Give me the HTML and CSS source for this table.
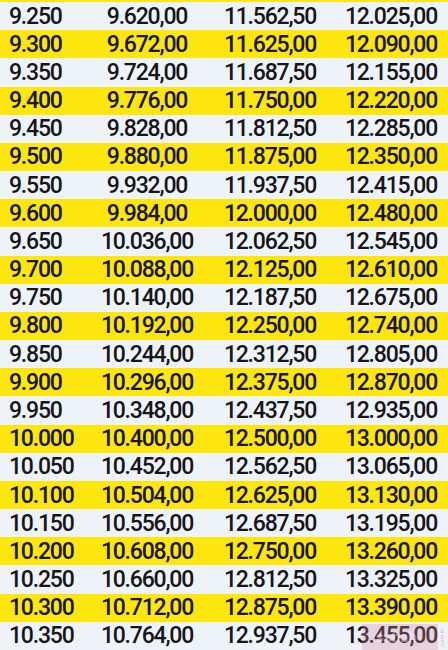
FILE: index.html
```html
<!DOCTYPE html>
<html>
<head>
<meta charset="utf-8">
<link rel="stylesheet" href="styles.css">
</head>
<body>
<div class="page">
  <div class="topstrip"></div>
  <div class="table" id="t">
    <div class="row w"><span class="c1">9.250</span><span class="c2">9.620,00</span><span class="c3">11.562,50</span><span class="c4">12.025,00</span></div>
    <div class="row y"><span class="c1">9.300</span><span class="c2">9.672,00</span><span class="c3">11.625,00</span><span class="c4">12.090,00</span></div>
    <div class="row w"><span class="c1">9.350</span><span class="c2">9.724,00</span><span class="c3">11.687,50</span><span class="c4">12.155,00</span></div>
    <div class="row y"><span class="c1">9.400</span><span class="c2">9.776,00</span><span class="c3">11.750,00</span><span class="c4">12.220,00</span></div>
    <div class="row w"><span class="c1">9.450</span><span class="c2">9.828,00</span><span class="c3">11.812,50</span><span class="c4">12.285,00</span></div>
    <div class="row y"><span class="c1">9.500</span><span class="c2">9.880,00</span><span class="c3">11.875,00</span><span class="c4">12.350,00</span></div>
    <div class="row w"><span class="c1">9.550</span><span class="c2">9.932,00</span><span class="c3">11.937,50</span><span class="c4">12.415,00</span></div>
    <div class="row y"><span class="c1">9.600</span><span class="c2">9.984,00</span><span class="c3">12.000,00</span><span class="c4">12.480,00</span></div>
    <div class="row w"><span class="c1">9.650</span><span class="c2">10.036,00</span><span class="c3">12.062,50</span><span class="c4">12.545,00</span></div>
    <div class="row y"><span class="c1">9.700</span><span class="c2">10.088,00</span><span class="c3">12.125,00</span><span class="c4">12.610,00</span></div>
    <div class="row w"><span class="c1">9.750</span><span class="c2">10.140,00</span><span class="c3">12.187,50</span><span class="c4">12.675,00</span></div>
    <div class="row y"><span class="c1">9.800</span><span class="c2">10.192,00</span><span class="c3">12.250,00</span><span class="c4">12.740,00</span></div>
    <div class="row w"><span class="c1">9.850</span><span class="c2">10.244,00</span><span class="c3">12.312,50</span><span class="c4">12.805,00</span></div>
    <div class="row y"><span class="c1">9.900</span><span class="c2">10.296,00</span><span class="c3">12.375,00</span><span class="c4">12.870,00</span></div>
    <div class="row w"><span class="c1">9.950</span><span class="c2">10.348,00</span><span class="c3">12.437,50</span><span class="c4">12.935,00</span></div>
    <div class="row y"><span class="c1">10.000</span><span class="c2">10.400,00</span><span class="c3">12.500,00</span><span class="c4">13.000,00</span></div>
    <div class="row w"><span class="c1">10.050</span><span class="c2">10.452,00</span><span class="c3">12.562,50</span><span class="c4">13.065,00</span></div>
    <div class="row y"><span class="c1">10.100</span><span class="c2">10.504,00</span><span class="c3">12.625,00</span><span class="c4">13.130,00</span></div>
    <div class="row w"><span class="c1">10.150</span><span class="c2">10.556,00</span><span class="c3">12.687,50</span><span class="c4">13.195,00</span></div>
    <div class="row y"><span class="c1">10.200</span><span class="c2">10.608,00</span><span class="c3">12.750,00</span><span class="c4">13.260,00</span></div>
    <div class="row w"><span class="c1">10.250</span><span class="c2">10.660,00</span><span class="c3">12.812,50</span><span class="c4">13.325,00</span></div>
    <div class="row y"><span class="c1">10.300</span><span class="c2">10.712,00</span><span class="c3">12.875,00</span><span class="c4">13.390,00</span></div>
    <div class="row w"><span class="c1">10.350</span><span class="c2">10.764,00</span><span class="c3">12.937,50</span><span class="c4">13.455,00</span></div>
  </div>
  <div class="watermark"><span class="wm-text">sabah</span><span class="wm-side">.com.tr</span></div>
</div>
</body>
</html>
```

FILE: styles.css
```css
html, body {
  margin: 0;
  padding: 0;
}
body {
  width: 448px;
  height: 650px;
  overflow: hidden;
  background: #eef3f8;
}
.page {
  position: relative;
  width: 448px;
  height: 650px;
  display: flex;
  flex-direction: column;
}
.topstrip {
  height: 2px;
  background: #fce60e;
}
.table {
  flex: 1;
  display: grid;
  grid-template-rows: repeat(23, 1fr);
}
.row {
  display: grid;
  grid-template-columns: 94px 106px 140px 108px;
  align-items: center;
  font-family: Roboto, sans-serif;
  font-size: 23px;
  font-weight: 500;
  letter-spacing: -1.2px;
  color: #16161a;
  line-height: 1;
}
.row.w { background: #eef3f8; }
.row.y { background: #fce60e; }
.c1 { padding-left: 9px; }
.c2, .c3 { text-align: center; }
.c4 { text-align: center; padding-right: 6px; }
.watermark {
  position: absolute;
  left: 362px;
  top: 624px;
  width: 76px;
  height: 26px;
  background: rgba(214, 140, 160, 0.3);
}
.wm-text {
  position: absolute;
  left: 14px;
  top: 4px;
  font-family: Roboto, sans-serif;
  font-size: 15px;
  line-height: 18px;
  font-weight: 700;
  color: rgba(255, 255, 255, 0.35);
}
.wm-side {
  position: absolute;
  left: 76px;
  top: 24px;
  font-family: Roboto, sans-serif;
  font-size: 6px;
  line-height: 8px;
  color: rgba(220, 150, 170, 0.8);
  transform: rotate(-90deg);
  transform-origin: left top;
  white-space: nowrap;
}
```
